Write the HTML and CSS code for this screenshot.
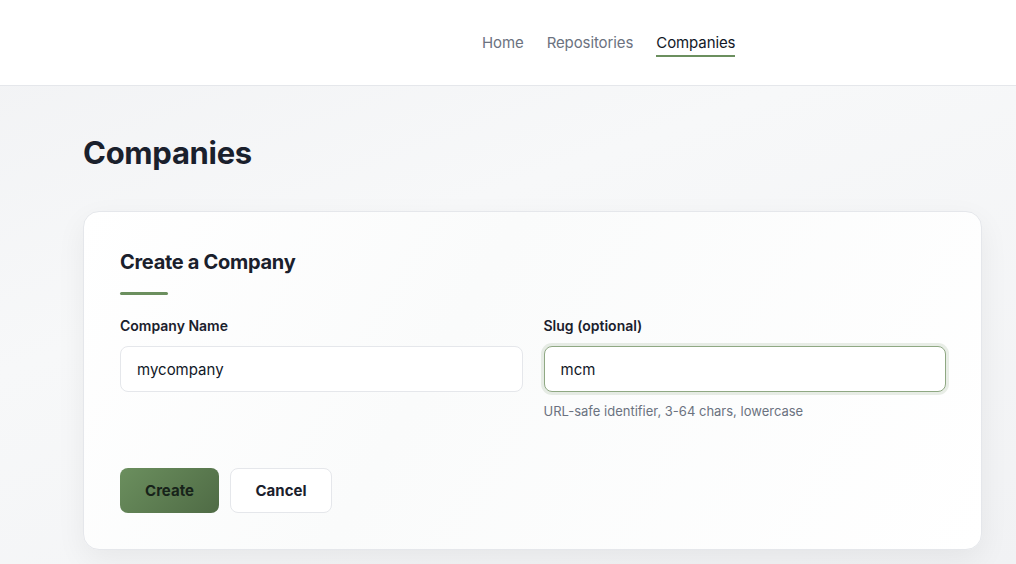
FILE: index.html
```html
<!DOCTYPE html>
<html lang="en">
<head>
  <meta charset="UTF-8">
  <meta name="viewport" content="width=device-width, initial-scale=1.0">
  <title>Companies</title>
  <link rel="stylesheet" href="styles.css">
</head>
<body>
  <div class="header">
    <nav class="nav">
      <a href="#">Home</a>
      <a href="#">Repositories</a>
      <a href="#" class="active">Companies</a>
    </nav>
  </div>

  <div class="main-content">
    <h1>Companies</h1>

    <!-- Create company card -->
    <div class="card">
      <h2>Create a Company</h2>
      <div class="accent"></div>
      <form id="companyForm">
        <div class="fields">
          <div class="field">
            <label for="companyName">Company Name</label>
            <input type="text" id="companyName" name="name" value="mycompany">
          </div>
          <div class="field">
            <label for="companySlug">Slug (optional)</label>
            <input type="text" id="companySlug" name="slug" value="mcm" class="focused">
            <p class="hint">URL-safe identifier, 3-64 chars, lowercase</p>
          </div>
        </div>
        <div class="actions">
          <button type="submit" class="btn-primary">Create</button>
          <button type="button" class="btn-secondary">Cancel</button>
        </div>
      </form>
    </div>
  </div>
</body>
</html>
```

FILE: styles.css
```css
* {
  box-sizing: border-box;
}
body {
  font-family: Inter, "Noto Sans", Arial, sans-serif;
  margin: 0;
  padding: 0;
  height: 564px;
  overflow: hidden;
  color: #111827;
  background: linear-gradient(160deg, #f1f2f4 0%, #f7f8f9 40%, #f1f2f4 100%);
}
.header {
  height: 86px;
  background-color: #fff;
  border-bottom: 1px solid #e5e7eb;
  display: flex;
  align-items: center;
  padding-left: 482px;
}
.nav {
  display: flex;
  gap: 23px;
}
.nav a {
  font-size: 15px;
  color: #6b7280;
  text-decoration: none;
  padding-bottom: 3px;
  border-bottom: 2px solid transparent;
  margin-top: 4px;
  letter-spacing: -0.1px;
}
.nav a.active {
  color: #111827;
  border-bottom-color: #6b8f5e;
}
.main-content {
  padding: 47px 34px 0 83px;
}
.main-content h1 {
  margin: 0 0 38px 0;
  font-size: 31px;
  line-height: 40px;
  font-weight: 700;
  letter-spacing: -0.3px;
  color: #1a202c;
}
.card {
  background: linear-gradient(120deg, #ffffff 0%, #fafbfb 40%, #ffffff 100%);
  border: 1px solid #e5e7eb;
  border-radius: 16px;
  box-shadow: 0 10px 30px rgba(0, 0, 0, 0.06);
  padding: 36px 35px 36px 36px;
}
.card h2 {
  margin: 0 0 16px 0;
  font-size: 20px;
  line-height: 28px;
  font-weight: 700;
  letter-spacing: -0.3px;
  color: #1a202c;
}
.accent {
  width: 48px;
  height: 3px;
  border-radius: 2px;
  background-color: #6b8f5e;
  margin-bottom: 21px;
}
.fields {
  display: grid;
  grid-template-columns: 1fr 1fr;
  gap: 21px;
  align-items: start;
}
.field label {
  display: block;
  font-size: 14px;
  line-height: 20px;
  font-weight: 600;
  color: #1a202c;
  margin-bottom: 10px;
}
.field input {
  width: 100%;
  height: 46px;
  padding: 0 16px;
  font-family: inherit;
  font-size: 15px;
  color: #111827;
  border: 1px solid #e5e7eb;
  border-radius: 8px;
  background: #fff;
  outline: none;
}
.field input.focused {
  border: 1.5px solid #8fa883;
  box-shadow: 0 0 0 3px rgba(107, 143, 94, 0.15);
}
.hint {
  margin: 10px 0 0 0;
  font-size: 13px;
  line-height: 18px;
  color: #6b7280;
}
.actions {
  display: flex;
  gap: 11px;
  margin-top: 48px;
}
.actions button {
  height: 45px;
  border-radius: 8px;
  font-family: inherit;
  font-size: 15px;
  font-weight: 700;
  cursor: pointer;
}
.btn-primary {
  width: 99px;
  border: none;
  color: #17231a;
  background: linear-gradient(135deg, #6b8f5e 0%, #4f6b45 100%);
}
.btn-secondary {
  width: 102px;
  border: 1px solid #e5e7eb;
  color: #1a202c;
  background: #fff;
}
```
